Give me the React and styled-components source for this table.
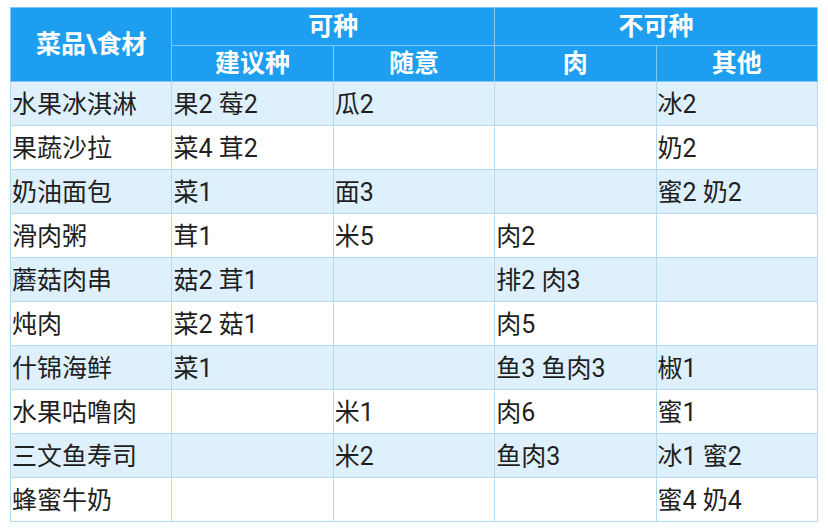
import React from "react";
import styled, { createGlobalStyle } from "styled-components";

const GlobalStyle = createGlobalStyle`
  body {
    margin: 0;
    background: #ffffff;
    font-family: Roboto, "Noto Sans CJK SC", sans-serif;
  }
`;

const Page = styled.div`
  padding: 7px 10px 0 10px;
`;

const Table = styled.table`
  width: 808px;
  border-collapse: collapse;
  table-layout: fixed;
  border: 1px solid #b2dbee;
`;

const HeadCell = styled.th`
  background: #1e9ef0;
  color: #ffffff;
  font-size: 25px;
  font-weight: 700;
  text-align: center;
  height: ${(p) => p.$h}px;
  padding: 0;
  border: 1px solid #7fc8f4;
  line-height: 1;
`;

const Row = styled.tr`
  background: ${(p) => (p.$striped ? "#ddf0fb" : "#ffffff")};
`;

const Cell = styled.td`
  height: 41px;
  padding: 2px 0 0 1px;
  font-size: 25px;
  color: #1f1f1f;
  border: 1px solid #b2dbee;
  white-space: nowrap;
  line-height: 1;
`;

const rows = [
  ["水果冰淇淋", "果2 莓2", "瓜2", "", "冰2"],
  ["果蔬沙拉", "菜4 茸2", "", "", "奶2"],
  ["奶油面包", "菜1", "面3", "", "蜜2 奶2"],
  ["滑肉粥", "茸1", "米5", "肉2", ""],
  ["蘑菇肉串", "菇2 茸1", "", "排2 肉3", ""],
  ["炖肉", "菜2 菇1", "", "肉5", ""],
  ["什锦海鲜", "菜1", "", "鱼3 鱼肉3", "椒1"],
  ["水果咕噜肉", "", "米1", "肉6", "蜜1"],
  ["三文鱼寿司", "", "米2", "鱼肉3", "冰1 蜜2"],
  ["蜂蜜牛奶", "", "", "", "蜜4 奶4"],
];

export default function App() {
  return (
    <Page>
      <GlobalStyle />
      <Table>
        <thead>
          <tr>
            <HeadCell rowSpan={2} $h={37}>菜品\食材</HeadCell>
            <HeadCell colSpan={2} $h={37}>可种</HeadCell>
            <HeadCell colSpan={2} $h={37}>不可种</HeadCell>
          </tr>
          <tr>
            <HeadCell $h={35}>建议种</HeadCell>
            <HeadCell $h={35}>随意</HeadCell>
            <HeadCell $h={35}>肉</HeadCell>
            <HeadCell $h={35}>其他</HeadCell>
          </tr>
        </thead>
        <tbody>
          {rows.map((r, i) => (
            <Row key={r[0]} $striped={i % 2 === 0}>
              {r.map((c, j) => (
                <Cell key={j}>{c}</Cell>
              ))}
            </Row>
          ))}
        </tbody>
      </Table>
    </Page>
  );
}
